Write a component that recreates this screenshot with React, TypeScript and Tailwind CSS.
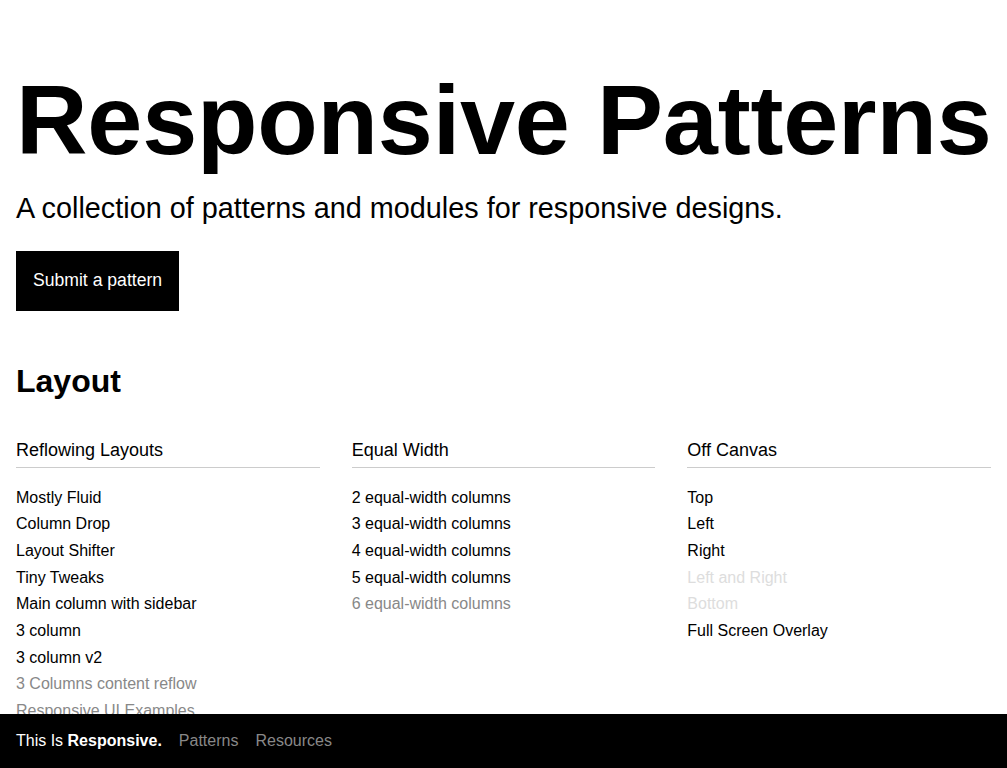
const columns = [
  {
    title: 'Reflowing Layouts',
    items: [
      { label: 'Mostly Fluid' },
      { label: 'Column Drop' },
      { label: 'Layout Shifter' },
      { label: 'Tiny Tweaks' },
      { label: 'Main column with sidebar' },
      { label: '3 column' },
      { label: '3 column v2' },
      { label: '3 Columns content reflow', tone: 'muted' },
      { label: 'Responsive UI Examples', tone: 'muted' },
      { label: 'Fluid Grid', tone: 'muted' },
    ],
  },
  {
    title: 'Equal Width',
    items: [
      { label: '2 equal-width columns' },
      { label: '3 equal-width columns' },
      { label: '4 equal-width columns' },
      { label: '5 equal-width columns' },
      { label: '6 equal-width columns', tone: 'muted' },
    ],
  },
  {
    title: 'Off Canvas',
    items: [
      { label: 'Top' },
      { label: 'Left' },
      { label: 'Right' },
      { label: 'Left and Right', tone: 'faint' },
      { label: 'Bottom', tone: 'faint' },
      { label: 'Full Screen Overlay' },
    ],
  },
];

const toneClass: Record<string, string> = {
  normal: 'text-black',
  muted: 'text-[#888]',
  faint: 'text-[#ddd]',
};

export default function App() {
  return (
    <div className="min-h-screen bg-white text-black font-['Liberation_Sans',Arial,sans-serif]">
      <main className="px-4 pt-[70px] pb-20">
        <h1 className="text-[99px] font-bold leading-none tracking-[-0.2px] whitespace-nowrap">
          Responsive Patterns
        </h1>
        <p className="mt-[22px] text-[28.8px] leading-[1.2]">
          A collection of patterns and modules for responsive designs.
        </p>
        <a
          href="#"
          className="mt-[25px] inline-flex h-[60px] items-center bg-black px-[17px] text-[17.6px] text-white"
        >
          Submit a pattern
        </a>

        <section className="mt-[51px]">
          <h2 className="text-[32px] font-bold leading-[1.2]">Layout</h2>
          <div className="mt-10 grid grid-cols-3 gap-8">
            {columns.map((col) => (
              <div key={col.title}>
                <h3 className="border-b border-[#ccc] pb-[5px] text-[18px] leading-[1.2]">
                  {col.title}
                </h3>
                <ul className="mt-[17px]">
                  {col.items.map((item) => (
                    <li
                      key={item.label}
                      className={`text-[16px] leading-[26.7px] ${toneClass[item.tone ?? 'normal']}`}
                    >
                      <a href="#">{item.label}</a>
                    </li>
                  ))}
                </ul>
              </div>
            ))}
          </div>
        </section>
      </main>

      {/* fixed footer bar */}
      <footer className="fixed inset-x-0 bottom-0 flex h-[54px] items-center gap-[17px] bg-black px-4 text-[16px]">
        <a href="#" className="text-white">
          This Is <strong className="font-bold">Responsive.</strong>
        </a>
        <a href="#" className="text-[#888]">Patterns</a>
        <a href="#" className="text-[#888]">Resources</a>
      </footer>
    </div>
  );
}
